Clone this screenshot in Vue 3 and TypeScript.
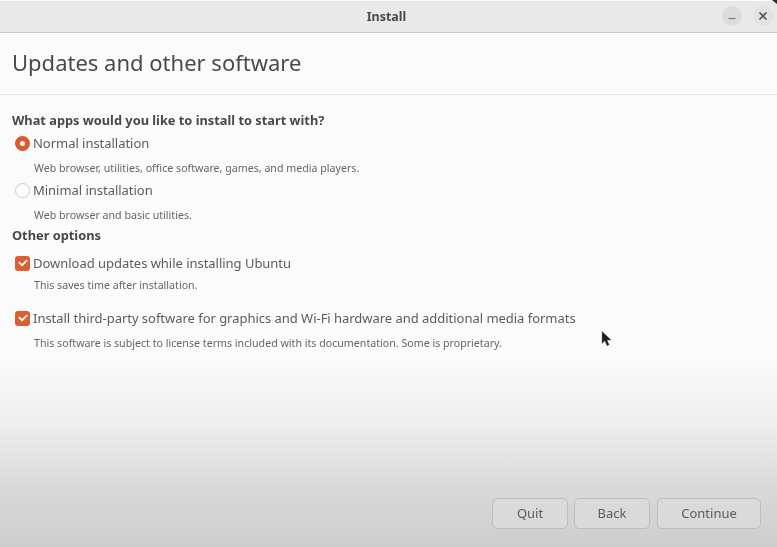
<template>
  <div class="window">
    <header class="titlebar">
      <span class="window-title">Install</span>
      <div class="window-controls">
        <button class="ctl" type="button" aria-label="Minimize">
          <svg width="10" height="10" viewBox="0 0 10 10"><path d="M1.5 7.5h7" stroke="#7a7a7a" stroke-width="1.2" fill="none" /></svg>
        </button>
        <button class="ctl close" type="button" aria-label="Close">
          <svg width="10" height="10" viewBox="0 0 10 10"><path d="M1.5 1.5l7 7M8.5 1.5l-7 7" stroke="#555" stroke-width="1.7" fill="none" /></svg>
        </button>
      </div>
      <span class="corner" />
    </header>

    <div class="page-head">
      <h1>Updates and other software</h1>
    </div>

    <main class="content">
      <h2 class="first">What apps would you like to install to start with?</h2>

      <div v-for="opt in installTypes" :key="opt.label" class="option radio-opt">
        <div class="option-row">
          <span class="radio" :class="{ on: opt.checked }" />
          <span class="label">{{ opt.label }}</span>
        </div>
        <p class="hint">{{ opt.hint }}</p>
      </div>

      <h2 class="second">Other options</h2>

      <div v-for="opt in otherOptions" :key="opt.label" class="option check-opt">
        <div class="option-row">
          <span class="check">
            <svg width="12" height="12" viewBox="0 0 12 12"><path d="M1.8 5.2l3.2 3 5.2-5" stroke="#fff" stroke-width="1.8" fill="none" /></svg>
          </span>
          <span class="label">{{ opt.label }}</span>
        </div>
        <p class="hint">{{ opt.hint }}</p>
      </div>
    </main>

    <footer class="actions">
      <button class="btn quit" type="button">Quit</button>
      <button class="btn back" type="button">Back</button>
      <button class="btn next" type="button">Continue</button>
    </footer>

    <svg class="cursor" width="11" height="16" viewBox="0 0 12 18">
      <path d="M1 0.5v13.5l3.2-3 2.4 5.6 2.4-1-2.4-5.4h4.6z" fill="#1d1d1d" stroke="#666" stroke-width="0.5" />
    </svg>
  </div>
</template>

<script setup lang="ts">
interface InstallOption {
  label: string
  hint: string
  checked?: boolean
}

const installTypes: InstallOption[] = [
  {
    label: 'Normal installation',
    hint: 'Web browser, utilities, office software, games, and media players.',
    checked: true
  },
  {
    label: 'Minimal installation',
    hint: 'Web browser and basic utilities.'
  }
]

const otherOptions: InstallOption[] = [
  {
    label: 'Download updates while installing Ubuntu',
    hint: 'This saves time after installation.'
  },
  {
    label: 'Install third-party software for graphics and Wi-Fi hardware and additional media formats',
    hint: 'This software is subject to license terms included with its documentation. Some is proprietary.'
  }
]
</script>

<style>
html,
body {
  margin: 0;
  background: #fafafa;
}
</style>

<style scoped>
.window {
  position: relative;
  width: 777px;
  height: 547px;
  overflow: hidden;
  display: flex;
  flex-direction: column;
  font-family: "Noto Sans", "Open Sans", sans-serif;
  color: #4d4d4d;
  background: linear-gradient(to bottom, #fbfbfb 0, #fbfbfb 360px, #efefef 420px, #d9d9d9 490px, #cdcdcd 547px);
  filter: blur(0.35px);
}

.titlebar {
  position: relative;
  flex: none;
  height: 31px;
  margin-top: 1px;
  padding-right: 4px;
  display: flex;
  align-items: center;
  justify-content: center;
  background: #e9e9e9;
  border-bottom: 1px solid #c9c9c9;
}

.window-title {
  font-size: 12.5px;
  font-weight: 700;
  color: #4a4a4a;
}

.window-controls {
  position: absolute;
  right: 4px;
  top: 5px;
  display: flex;
  gap: 11px;
}

.ctl {
  width: 20px;
  height: 20px;
  padding: 0;
  border: none;
  border-radius: 50%;
  background: #dcdcdc;
  display: flex;
  align-items: center;
  justify-content: center;
}

.ctl.close {
  background: #e2e2e2;
}

.corner {
  position: absolute;
  top: -1px;
  right: 0;
  width: 5px;
  height: 4px;
  background: #2a2a2a;
  clip-path: polygon(0 0, 100% 0, 100% 100%);
}

.page-head {
  flex: none;
  height: 62px;
  box-sizing: border-box;
  padding: 0 0 3px 12px;
  display: flex;
  align-items: center;
  border-bottom: 1px solid #e4e4e4;
}

h1 {
  margin: 0;
  font-size: 22px;
  font-weight: 400;
  color: #4a4a4a;
}

.content {
  flex: 1;
  padding: 0 12px;
}

h2 {
  margin: 0;
  font-size: 12.8px;
  line-height: 16px;
  font-weight: 700;
  color: #484848;
}

h2.first {
  margin-top: 17px;
}

h2.second {
  margin-top: 5px;
}

.option-row {
  display: flex;
  align-items: center;
  height: 20px;
}

.radio-opt {
  margin-top: 5px;
}

.radio-opt + .radio-opt {
  margin-top: 5px;
}

.check-opt {
  margin-top: 10px;
}

.check-opt + .check-opt {
  margin-top: 16px;
}

.radio {
  flex: none;
  box-sizing: border-box;
  width: 15px;
  height: 15px;
  margin: 0 3px;
  border-radius: 50%;
  border: 1px solid #cfcfcf;
  background: #fdfdfd;
}

.radio.on {
  border: 5px solid #dd5a2b;
  background: #fff;
}

.check {
  flex: none;
  box-sizing: border-box;
  width: 15px;
  height: 15px;
  margin: 0 3px;
  border-radius: 3px;
  background: #dd5f30;
  display: flex;
  align-items: center;
  justify-content: center;
}

.label {
  font-size: 13px;
  letter-spacing: -0.03px;
  color: #5c5c5c;
}

.hint {
  margin: 8px 0 0 22px;
  font-size: 10.65px;
  line-height: 14px;
  color: #666;
}

.check-opt .hint {
  margin-top: 5px;
}

.check-opt + .check-opt .hint {
  margin-top: 8px;
}

.actions {
  flex: none;
  display: flex;
  justify-content: flex-end;
  gap: 6px;
  padding: 0 16px 18px 0;
}

.btn {
  height: 31px;
  padding: 0 0 2px;
  font-family: inherit;
  font-size: 13px;
  color: #5c5c5c;
  border: 1px solid #bdbdbd;
  border-radius: 5px;
  background: #dadada;
}

.quit,
.back {
  width: 76px;
}

.back {
  margin-right: 1px;
}

.next {
  width: 104px;
}

.cursor {
  position: absolute;
  left: 601px;
  top: 331px;
}
</style>
